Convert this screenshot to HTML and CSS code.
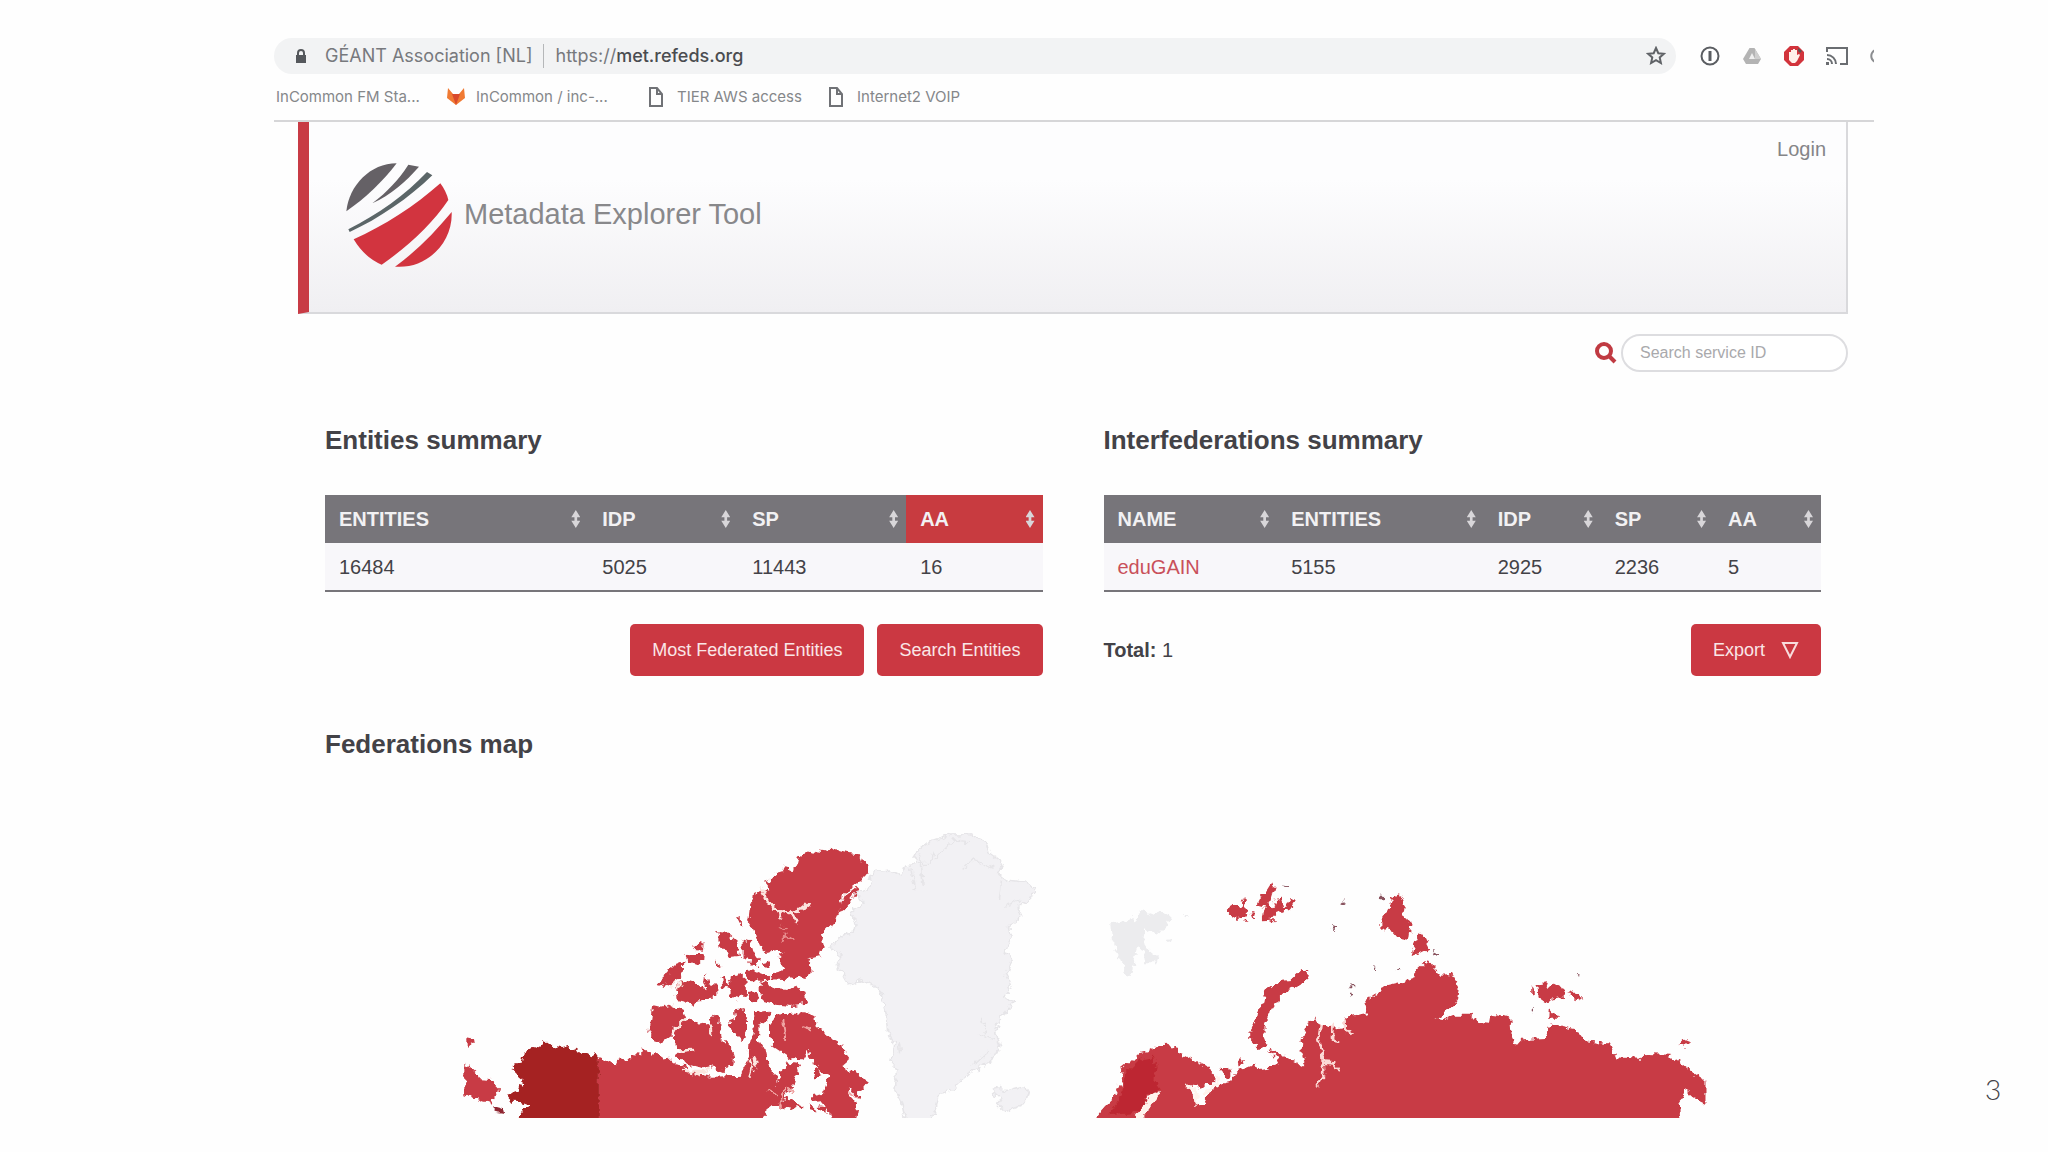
FILE: index.html
```html
<!DOCTYPE html>
<html lang="en">
<head>
<meta charset="utf-8">
<title>Metadata Explorer Tool</title>
<link rel="stylesheet" href="styles.css">
</head>
<body>
<div class="slide">
<div class="capture">
  <div class="toolbar">
    <div class="address">
      <svg class="lock" width="12" height="14" viewBox="0 0 12 14" aria-hidden="true"><path d="M1 6h10v8H1z" fill="#55585c"/><path d="M3 7V4a3 3 0 0 1 6 0v3" fill="none" stroke="#55585c" stroke-width="2"/></svg>
      <span class="org">GÉANT Association [NL]</span>
      <span class="sep"></span>
      <span class="url">https://<b>met.refeds.org</b></span>
      <svg class="star" width="20" height="20" viewBox="0 0 20 20" aria-hidden="true"><path d="M10 2l2.3 5.2 5.6.5-4.2 3.7 1.2 5.6L10 14.100l-4.900 2.900 1.200-5.600L2.100 7.700l5.600-.5z" fill="none" stroke="#606367" stroke-width="2"/></svg>
    </div>
    <div class="extensions">
      <svg width="20" height="20" viewBox="0 0 20 20" aria-hidden="true"><circle cx="10" cy="10" r="8.500" fill="#fff" stroke="#5b5e62" stroke-width="2"/><path d="M8.500 5h3v10h-3z" fill="#5b5e62"/></svg>
      <svg width="20" height="20" viewBox="0 0 20 20" aria-hidden="true"><path d="M7.500 2h5L19 13l-3 5H4l-3-5z" fill="#b4b4b4"/><path d="M10 7l3 6H7z" fill="#efefef"/><path d="M13 3l6 10h-6z" fill="#cfcfcf"/></svg>
      <svg width="20" height="20" viewBox="0 0 20 20" aria-hidden="true"><path d="M6 0h8l6 6v8l-6 6H6l-6-6V6z" fill="#d2343c"/><path d="M5 10V6h2V4h2V3h2v1h2v5l2-1 1 1-3 6-2 2H8l-3-3z" fill="#fff0ea"/><path d="M14 2l4 3-2 2-2-2z" fill="#605252"/></svg>
      <svg width="22" height="20" viewBox="0 0 22 20" aria-hidden="true"><path d="M1 6V2h20v16h-7" fill="none" stroke="#6a6d71" stroke-width="2"/><path d="M1 9a9 9 0 0 1 9 9M1 13a5 5 0 0 1 5 5" fill="none" stroke="#6a6d71" stroke-width="2"/><path d="M0 16h3v3H0z" fill="#6a6d71"/></svg>
      <svg width="4" height="20" viewBox="0 0 4 20" aria-hidden="true"><path d="M5 4c-5 3-5 9 0 12" fill="none" stroke="#8b8d90" stroke-width="2"/></svg>
    </div>
  </div>
  <nav class="bookmarks" aria-label="Bookmarks">
    <a class="bm-first" href="#">InCommon FM Sta...</a>
    <a class="bm-lab" href="#"><svg width="20" height="18" viewBox="0 0 20 18" aria-hidden="true"><path d="M10 17L1 10 2 0l5 6h6l5-6 1 10z" fill="#f07a33"/><path d="M10 17L6 6h8z" fill="#d9492b"/></svg>InCommon / inc-...</a>
    <a class="bm-file" href="#"><svg width="16" height="20" viewBox="0 0 16 20" aria-hidden="true"><path d="M2 1h7l5 6v12H2zM9 1v6h5" fill="none" stroke="#707276" stroke-width="2"/></svg>TIER AWS access</a>
    <a class="bm-file" href="#"><svg width="16" height="20" viewBox="0 0 16 20" aria-hidden="true"><path d="M2 1h7l5 6v12H2zM9 1v6h5" fill="none" stroke="#707276" stroke-width="2"/></svg>Internet2 VOIP</a>
  </nav>
  <div class="page">
    <header class="banner">
      <svg class="logo" width="108" height="108" viewBox="0 0 324 324" aria-hidden="true">
        <g transform="translate(-53 -60)">
          <path d="M54 214C62 136 126 70 205 70C164 124 112 174 54 214z" fill="#656166"/>
          <path d="M132 190C176 156 212 118 240 74L272 80C232 126 188 164 132 190z" fill="#656166"/>
          <path d="M60 268C148 224 232 164 296 96L312 106C242 174 152 236 64 276z" fill="#5b6668"/>
          <path d="M76 298C166 258 260 198 336 130Q354 154 360 180C312 252 238 320 160 374Q108 352 76 298z" fill="#d2343f"/>
          <path d="M200 380C264 334 320 276 370 216C374 308 296 388 200 380z" fill="#d2343f"/>
        </g>
      </svg>
      <h1>Metadata Explorer Tool</h1>
      <a class="login" href="#">Login</a>
    </header>
    <form class="search" action="#">
      <label for="sid" aria-label="Search"><svg width="22" height="22" viewBox="0 0 22 22" aria-hidden="true"><circle cx="9" cy="9" r="7" fill="none" stroke="#c03a42" stroke-width="4"/><path d="M14 14l6 6" stroke="#c03a42" stroke-width="4"/></svg></label>
      <input id="sid" type="text" placeholder="Search service ID">
    </form>
    <main>
      <div class="summaries">
        <section>
          <h2>Entities summary</h2>
          <table class="entities">
            <thead><tr>
              <th><span>ENTITIES</span></th><th><span>IDP</span></th><th><span>SP</span></th><th class="active"><span>AA</span></th>
            </tr></thead>
            <tbody><tr><td>16484</td><td>5025</td><td>11443</td><td>16</td></tr></tbody>
          </table>
          <div class="actions end">
            <button type="button">Most Federated Entities</button>
            <button type="button">Search Entities</button>
          </div>
        </section>
        <section>
          <h2>Interfederations summary</h2>
          <table class="inter">
            <thead><tr>
              <th><span>NAME</span></th><th><span>ENTITIES</span></th><th><span>IDP</span></th><th><span>SP</span></th><th><span>AA</span></th>
            </tr></thead>
            <tbody><tr><td><a href="#">eduGAIN</a></td><td>5155</td><td>2925</td><td>2236</td><td>5</td></tr></tbody>
          </table>
          <div class="actions">
            <p><b>Total:</b> 1</p>
            <button type="button">Export <svg width="18" height="18" viewBox="0 0 18 18" aria-hidden="true"><path d="M2 2h14L9 16z" fill="none" stroke="#f8dcdd" stroke-width="2"/></svg></button>
          </div>
        </section>
      </div>
      <section>
        <h2>Federations map</h2>
        <svg class="map" viewBox="325 820 1496 298" role="img" aria-label="Map of federations">
          <defs>
            <!-- Roughens the coastlines -->
            <filter id="coast" filterUnits="userSpaceOnUse" x="325" y="820" width="1496" height="310">
              <feTurbulence type="fractalNoise" baseFrequency=".16" numOctaves="2" seed="4"/>
              <feDisplacementMap in="SourceGraphic" scale="9" xChannelSelector="R" yChannelSelector="G"/>
            </filter>
          </defs>
          <!-- Greenland and Iceland -->
          <g filter="url(#coast)">
          <g transform="translate(440 800) scale(.39541 .33333)" fill="#f2f1f4" stroke="#e6e5e8" stroke-width="4" stroke-linejoin="round">
            <path d="M1180 970L1168 910 1150 870 1158 810 1142 790 1150 730 1132 700 1128 640 1112 570 1070 540 1030 552 1022 520 1000 500 1014 470 985 440 1020 405 1045 400 1052 360 1040 335 1070 310 1050 275 1085 262 1095 215 1140 210 1165 225 1175 195 1205 190 1198 160 1240 125 1290 105 1340 104 1382 125 1390 160 1424 190 1410 220 1430 240 1480 246 1505 268 1490 300 1462 320 1470 350 1440 375 1445 420 1428 450 1445 480 1432 520 1445 555 1430 590 1450 610 1420 650 1405 690 1415 740 1395 785 1350 812 1310 850 1300 872 1265 880 1255 920 1240 970z"/>
            <path fill="none" d="M1200 270L1190 200M1222 260L1215 160M1205 190L1240 190 1250 155M1250 180L1300 120 1340 125M1320 210L1350 180 1400 205M1420 240L1415 300M1430 320L1470 300M1365 700L1400 720M1350 790L1390 750M1370 650L1380 700M1160 720L1165 760"/>
            <path d="M1395 868L1420 862 1430 875 1478 860 1488 880 1480 910 1430 932 1410 910 1420 895 1400 885z"/>
          </g>
          </g>
          <!-- Alaska, Chukotka and mainland Canada -->
          <g filter="url(#coast)">
          <g transform="translate(440 800) scale(.39541 .33333)" fill="#c83b45">
            <path d="M66 712L84 716 86 732 68 740z"/>
            <path d="M64 788L92 818 100 838 130 840 152 866 140 884 130 908 108 904 64 886z"/>
            <path d="M134 922L160 930 162 940 140 936z" fill="#8f2530"/>
            <path d="M402 970V772L425 782 442 796 450 774 475 780 488 762 508 766 512 742 522 758 540 764 545 756 555 774 575 770 592 790 620 796 630 818 690 830 745 828 800 826 850 835 850 870 860 880 850 910 820 940 815 970z"/>
            <path d="M402 970H190L212 930 226 916 204 906 180 905 168 885 196 874 200 860 218 852 180 812 190 796 206 790 212 756 236 738 250 742 266 722 284 740 305 744 325 738 350 756 372 760 402 772z" fill="#a52124"/>
          </g>
          <!-- Ellesmere and the northern islands -->
          <g transform="translate(640 840) scale(.33333)" fill="#c83b45">
            <path d="M372 128L390 122 412 100 436 96 428 76 442 78 450 94 470 78 476 54 496 36 516 42 530 30 556 34 574 24 600 34 616 38 642 44 660 46 666 62 682 76 682 98 664 122 610 160 604 196 580 256 558 266 540 282 548 316 538 346 520 350 510 366 512 402 496 420 458 410 430 420 390 418 400 400 436 390 410 356 432 336 412 330 380 336 356 316 348 280 324 246 330 200 340 180 342 162 356 156 366 148 390 152z"/>
            <path d="M648 140L656 148 608 210 594 220 616 166z"/>
            <path d="M288 230L302 234 304 260z"/>
            <path d="M232 276L256 278 292 310 300 350 268 354 256 326 242 326z"/>
            <path d="M308 302L330 306 340 340 356 362 350 376 328 372 330 352 308 346z"/>
            <path d="M160 320L176 306 194 312 192 332 164 330zM136 346L150 342 188 342 186 366 166 374 144 362z"/>
            <path d="M226 358L238 376 244 386 232 380zM372 366L388 362 392 380 378 386z"/>
            <path d="M90 382L130 366 128 400 96 440 76 434 60 440 56 424 74 416z"/>
            <path d="M124 418L146 428 160 424 182 440 200 448 192 426 196 400 206 430 232 434 232 464 218 476 178 478 160 500 136 486 110 480 106 450z"/>
            <path d="M242 406L258 412 264 432 276 412 300 402 316 414 318 460 300 478 274 470 268 444 248 440z"/>
            <path d="M320 396L346 394 388 410 384 424 326 420zM326 456L350 450 358 490 340 490 320 474z"/>
            <path d="M362 424L390 432 398 446 440 450 470 440 496 452 500 480 492 492 456 498 410 494 374 488 362 470z"/>
          </g>
          <!-- Victoria, Baffin and the southern archipelago -->
          <g transform="translate(630 980) scale(.33333)" fill="#c83b45">
            <path d="M70 76L90 80 120 74 158 92 166 112 138 138 122 150 122 172 98 190 70 180 58 154z"/>
            <path d="M158 126L190 120 210 134 234 128 250 104 270 110 268 132 276 180 304 206 312 232 310 256 288 262 282 276 246 262 250 250 214 264 166 250 158 238 134 236 144 220 192 214 140 206 136 184 126 172 138 150z"/>
            <path d="M294 124L316 116 312 94 346 90 354 120 354 156 338 180 318 158 300 142z"/>
            <path d="M366 90L380 96 418 92 414 116 386 138 384 176 400 202 406 230 420 246 424 270 440 292 434 310 390 300 340 296 330 284 356 236 358 190 368 160z"/>
            <path d="M434 112L470 102 524 100 556 108 560 140 588 160 606 178 640 196 644 222 658 240 644 252 650 270 680 274 690 292 714 308 700 328 684 334 692 352 670 340 656 322 650 340 672 364 684 390 676 430H606L596 390 574 364 546 366 540 350 582 342 588 310 598 286 576 276 558 264 552 290 574 286 560 258 540 228 536 212 520 240 500 232 484 236 454 216 430 200 420 170 420 130z"/>
            <path d="M470 244L500 248 506 272 494 318 474 326 462 360 452 382 424 378 410 360 412 330 440 322 434 300 450 296 446 270 462 266z"/>
            <path d="M470 350L486 360 510 376 484 390 452 382zM502 376L520 378 518 390zM536 372L550 376 556 392 540 388zM566 376L590 380 590 398 568 392z"/>
          </g>
          <!-- Straits and fjords -->
          <g transform="translate(640 840) scale(.33333)" fill="none" stroke="#fdf1ea" stroke-width="9">
            <path d="M362 144L384 186 414 212 446 218 482 210 508 188M418 214L420 236M456 220L472 248" stroke="#fbe3de"/>
            <path d="M420 256L440 266M424 304L436 292 460 300M436 280L438 292" stroke="#e78d8e" stroke-width="6"/>
            <path d="M92 444L108 420M112 448L124 424" stroke-width="6"/>
          </g>
          <g transform="translate(630 980) scale(.33333)" fill="none" stroke="#fbe6df" stroke-width="8">
            <path d="M160 270L190 276 226 276 240 256M190 276L210 286M240 130L244 168M126 156L168 112M146 212L194 210M360 240L366 260 358 296M372 230L380 262"/>
            <path d="M460 120L462 150 466 180M514 138L540 146M466 322L450 382M414 330L440 344M650 336L690 356M470 320L490 338" stroke="#efa3a2" stroke-width="6"/>
          </g>
          </g>
          <!-- Svalbard, Russia and Scandinavia -->
          <g filter="url(#coast)">
          <path transform="translate(1080 840) scale(.42092 .33333)" fill="#ececee" d="M72 250L100 245 120 235 130 250 145 210 175 225 195 215 215 232 200 270 175 280 155 268 150 300 165 330 186 350 180 370 155 370 150 330 135 320 125 400 112 408 100 370 85 330 76 300zM240 225l14 0-8 12zM205 300l18-4-8 14z"/>
          <g transform="translate(1080 840) scale(.42092 .33333)" fill="#c83b45">
            <path d="M30 850L36 834 58 800 82 770 96 730 104 690 92 692 122 662 140 640 160 634 180 616 208 614 230 620 236 640 262 656 292 672 318 700 316 728 284 742 252 734 272 770 284 796 298 790 300 766 322 744 340 728 356 724 376 694 418 672 424 688 460 680 470 660 448 628 480 646 536 682 524 630 528 590 542 550 560 534 566 550 600 566 632 560 630 530 682 520 672 484 690 472 730 436 770 424 800 410 798 388 824 358 846 388 856 404 884 402 900 440 896 480 884 504 846 538 862 540 890 524 930 524 944 546 974 548 978 522 1000 526 1022 534 1026 590 1036 618 1050 598 1106 594 1108 560 1126 556 1186 572 1204 604 1260 614 1272 652 1332 656 1344 642 1398 644 1430 672 1458 700 1486 722V792L1462 778 1440 754 1422 790 1428 850z"/>
            <path d="M524 390L542 396 540 416 508 440 486 458 470 480 450 520 436 560 436 590 446 620 424 624 402 596 402 576 416 550 420 520 436 480 440 450 468 424 500 420z"/>
            <path d="M748 166L758 160 772 198 768 230 790 250 784 304 760 298 746 276 716 262 716 240 732 210z"/>
            <path d="M808 274L818 290 832 326 810 340 788 348 794 310z"/>
            <path d="M1086 434L1104 430 1112 444 1124 430 1148 446 1150 474 1124 478 1106 488 1090 474zM1158 454L1180 460 1196 474 1178 484zM1114 504L1136 536 1112 536zM1072 440l6 0 0 20-6 0zM1436 594L1452 602 1438 620 1422 612z"/>
            <path d="M346 206L364 192 384 198 390 170 394 210 402 226 384 230 376 240 358 230zM432 166L444 150 456 126 462 140 456 166 450 190 464 202 460 180 480 176 486 200 500 174 510 184 500 204 466 222 456 236 432 238 434 220 444 204 420 196zM406 216L418 220 412 236zM390 238l8 4-6 8zM452 238l14 0-8 10zM334 684L356 684 360 700 346 718zM376 658L390 662 380 682zM294 778l10-4 4 10-10 4z"/>
            <path fill="#8a5560" d="M712 164h8v14h-8zM618 190l10-12 4 10-6 6zM598 258l12 6-6 10zM838 332l14 8-6 8zM696 382l8 2-2 12zM750 392l10-12 2 14zM640 436l14 0 0 6-14 0zM642 458l6 0-2 14zM480 136l14 2 0 4zM1072 506l6 0-2 18zM1178 402l8 2-6 6z"/>
            <path fill="#bd2830" d="M108 700L140 660 176 650 182 680 174 720 190 750 164 762 146 800 128 820 64 826 94 780z"/>
          </g>
          <g transform="translate(1090 990) scale(.33333)" fill="none" stroke="#fff3ed" stroke-width="9" stroke-linecap="round">
            <path d="M692 106L686 146 696 178 698 218 700 250 680 290M702 218L730 220 742 240M764 90L762 112 790 134M728 104L726 144 738 154" stroke="#fbd9d5" stroke-width="8"/>
            <path d="M196 316L176 340 162 362 138 396" stroke-width="22"/>
            <path d="M292 288L322 308M316 302L320 340M346 310L380 278M386 286L380 258"/>
          </g>
          </g>
        </svg>
      </section>
    </main>
  </div>
</div>
<div class="slide-number">3</div>
</div>
</body>
</html>
```
FILE: styles.css
```css
* { box-sizing: border-box; }
body {
  margin: 0;
  background: #fefefe;
  color: #434247;
  font: 20px/28px "Liberation Sans", Arial, sans-serif;
}
h1, h2, p { margin: 0; }
a { color: inherit; text-decoration: none; }
svg { display: block; flex: none; }

.slide {
  display: grid;
  grid-template-columns: 274px minmax(0, 1fr) 174px;
  min-height: 100vh;
}
.capture { grid-column: 2; padding-top: 38px; }
.slide-number {
  align-self: end;
  padding: 0 0 49px 111px;
  font: 300 28px/28px Lato, sans-serif;
}

.toolbar { display: flex; align-items: center; }
.address {
  flex: 1;
  display: flex;
  align-items: center;
  height: 36px;
  padding: 0 10px 0 21px;
  border-radius: 18px;
  background: #f2f3f4;
  color: #77797d;
  font: 18px/24px Inter, sans-serif;
}
.org { margin-left: 18px; }
.sep { width: 1px; height: 24px; margin: 0 11px; background: #b5b7b9; }
.url b { color: #4a4c50; font-weight: 500; }
.star { margin-left: auto; }
.extensions {
  display: flex;
  align-items: center;
  gap: 22px;
  padding-left: 24px;
}

.bookmarks {
  display: flex;
  align-items: center;
  height: 46px;
  padding-left: 2px;
  color: #85878a;
  font: 15px/20px Inter, sans-serif;
}
.bookmarks a { display: flex; align-items: center; white-space: nowrap; }
.bm-first { width: 170px; }
.bm-lab { gap: 10px; width: 202px; }
.bm-file { gap: 13px; width: 180px; }

.page {
  padding: 0 26px 0 24px;
  border-top: 2px solid #d6d6d8;
}
.banner {
  display: flex;
  align-items: center;
  height: 192px;
  padding: 0 20px 6px 37px;
  border: solid #d9d9dc;
  border-width: 0 2px 2px 0;
  border-left: 11px solid #c83b45;
  background: linear-gradient(#fdfdfe 30%, #f0eff2);
}
.logo { overflow: visible; }
.banner h1 {
  margin-left: 10px;
  color: #88888b;
  font: 29px/36px "Liberation Sans", Arial, sans-serif;
}
.login {
  align-self: flex-start;
  margin: 13px 0 0 auto;
  color: #858588;
}
.search {
  display: flex;
  justify-content: flex-end;
  align-items: center;
  gap: 4px;
  margin-top: 20px;
}
.search input {
  width: 227px;
  height: 38px;
  padding: 0 17px;
  border: 2px solid #dddde0;
  border-radius: 19px;
  background: #fff;
  font: 16px/20px "Liberation Sans", Arial, sans-serif;
}
.search input::placeholder { color: #a9a9ac; opacity: 1; }

main { padding: 52px 27px 0; }
.summaries {
  display: grid;
  grid-template-columns: 1fr 1fr;
  gap: 61px;
  margin-bottom: 52px;
}
h2 { font-size: 26px; line-height: 32px; }
table {
  width: 100%;
  margin-top: 39px;
  table-layout: fixed;
  border-collapse: collapse;
  border-bottom: 2px solid #77757a;
}
th, td { padding: 0 14px; text-align: left; }
th {
  height: 48px;
  background: #77757a;
  color: #f2f1f3;
  font-size: 20px;
}
th span { display: flex; align-items: center; justify-content: space-between; }
th span::after {
  content: "";
  width: 9px;
  height: 18px;
  margin-right: -6px;
  background: #d8d6d9;
  clip-path: polygon(50% 0, 100% 40%, 65% 40%, 65% 60%, 100% 60%, 50% 100%, 0 60%, 35% 60%, 35% 40%, 0 40%);
}
td { height: 48px; background: #f8f7fa; }
td a { color: #c9505a; }
.active { background: #c83b40; }
.entities th:nth-child(1) { width: 36.7%; }
.entities th:nth-child(2) { width: 20.9%; }
.entities th:nth-child(3) { width: 23.4%; }
.inter th:nth-child(1) { width: 24.2%; }
.inter th:nth-child(2) { width: 28.8%; }
.inter th:nth-child(3) { width: 16.3%; }
.inter th:nth-child(4) { width: 15.8%; }

.actions {
  display: flex;
  align-items: center;
  justify-content: space-between;
  gap: 13px;
  margin-top: 32px;
}
.end { justify-content: flex-end; }
button {
  display: flex;
  align-items: center;
  gap: 16px;
  height: 52px;
  padding: 0 22px;
  border: 0;
  border-radius: 5px;
  background: #cb3842;
  color: #fae6e7;
  font: 18px/24px "Liberation Sans", Arial, sans-serif;
}
.map { width: 100%; margin-top: 60px; }
```
